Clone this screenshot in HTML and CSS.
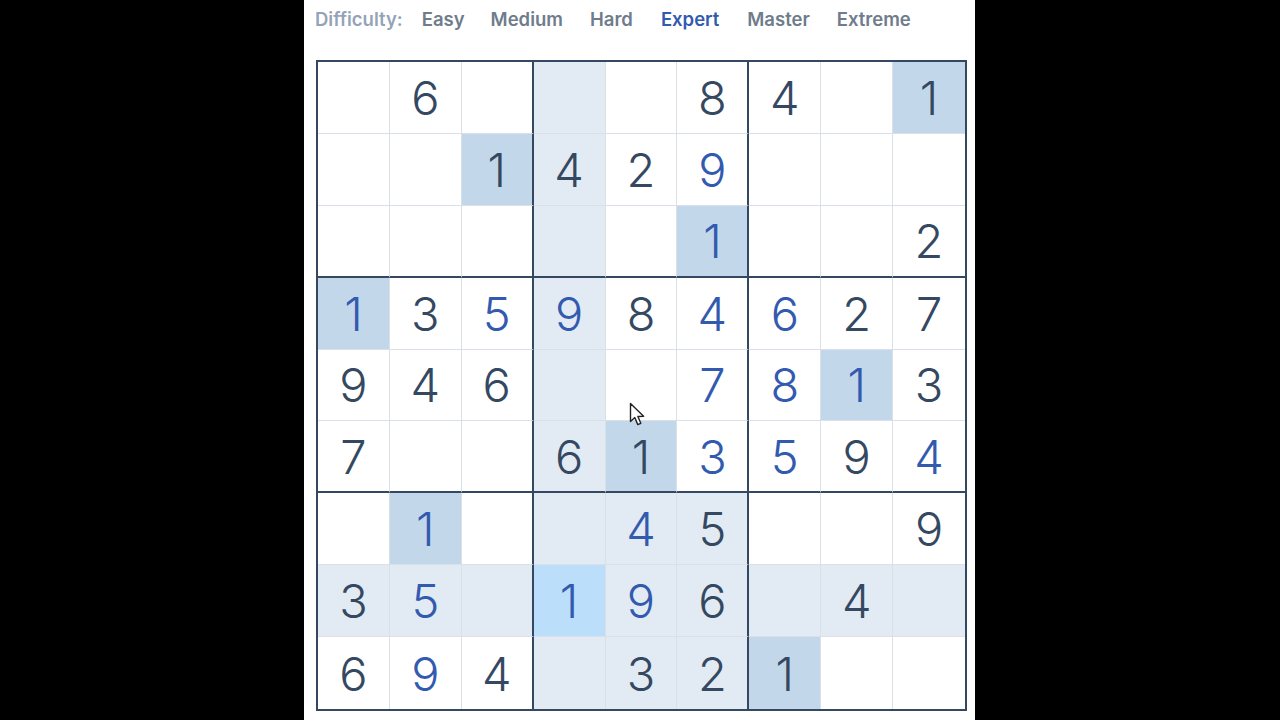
FILE: index.html
```html
<!DOCTYPE html>
<html>
<head>
<meta charset="utf-8">
<link rel="stylesheet" href="styles.css">
</head>
<body>
<div class="panel">
  <div class="levels">
    <span class="label">Difficulty:</span>
    <span class="lvl">Easy</span>
    <span class="lvl">Medium</span>
    <span class="lvl wide">Hard</span>
    <span class="lvl wide active">Expert</span>
    <span class="lvl">Master</span>
    <span class="lvl">Extreme</span>
  </div>
  <div class="board" id="board"></div>
  <svg class="cursor" width="18" height="26" viewBox="0 0 18 26"><path d="M1.5 1.5 L1.5 19.5 L5.8 15.6 L8.8 22.6 L11.8 21.3 L8.9 14.5 L14.6 14.2 Z" fill="#fff" stroke="#222" stroke-width="1.4" stroke-linejoin="round"/></svg>
</div>
<script src="app.js"></script>
</body>
</html>
```
FILE: styles.css
```css
html, body { margin: 0; padding: 0; background: #000; }
body { width: 1280px; height: 720px; overflow: hidden; }
.panel {
  position: relative;
  width: 671px;
  height: 720px;
  margin-left: 304px;
  background: #fff;
  padding: 0 8px 0 12px;
  box-sizing: border-box;
}
.levels {
  height: 38px;
  display: flex;
  align-items: center;
  font-family: Inter, "Liberation Sans", sans-serif;
  font-size: 18.5px;
  font-weight: 600;
  color: #6e7c8c;
  margin-left: -1px;
}
.label { color: #94a3b7; margin-right: 19px; }
.lvl { margin-right: 26px; }
.lvl + .lvl { margin-right: 27px; }
.lvl.wide { margin-right: 28px; }
.lvl.active { color: #325aaf; }
.board {
  margin-top: 22px;
  width: 651px;
  height: 651px;
  box-sizing: border-box;
  border: 2px solid #344861;
  display: grid;
  grid-template-columns: repeat(9, 1fr);
  grid-template-rows: repeat(9, 1fr);
}
.cell {
  box-sizing: border-box;
  border-right: 1px solid #dae0e8;
  border-bottom: 1px solid #dae0e8;
  display: flex;
  align-items: center;
  justify-content: center;
  font-family: Inter, "Liberation Sans", sans-serif;
  font-weight: 300;
  font-size: 47px;
  color: #344861;
  background: #fff;
}
.cell.br { border-right: 2px solid #344861; }
.cell.bb { border-bottom: 2px solid #344861; }
.cell.lc { border-right: none; }
.cell.lr { border-bottom: none; }
.cell.u { color: #325aaf; }
.cell.hl { background: #e2ebf3; }
.cell.same { background: #c3d7ea; }
.cell.sel { background: #bbdefb; }
.cursor { position: absolute; left: 325px; top: 402px; }
```
FILE: app.js
```js
var vals = [
  "060008401",
  "001429000",
  "000001002",
  "135984627",
  "946007813",
  "700613594",
  "010045009",
  "350196040",
  "694032100"
];
var user = [
  "000000000",
  "000001000",
  "000001000",
  "101101100",
  "000001110",
  "000001101",
  "010010000",
  "010110000",
  "010000000"
];
var board = document.getElementById('board');
for (var r = 0; r < 9; r++) {
  for (var c = 0; c < 9; c++) {
    var d = document.createElement('div');
    var cls = ['cell'];
    var v = vals[r][c];
    if (c === 2 || c === 5) cls.push('br');
    if (r === 2 || r === 5) cls.push('bb');
    if (c === 8) cls.push('lc');
    if (r === 8) cls.push('lr');
    if (user[r][c] === '1') cls.push('u');
    if (r === 7 && c === 3) cls.push('sel');
    else if (v === '1') cls.push('same');
    else if (r === 7 || c === 3 || (r >= 6 && c >= 3 && c <= 5)) cls.push('hl');
    d.className = cls.join(' ');
    d.textContent = v === '0' ? '' : v;
    board.appendChild(d);
  }
}
```
